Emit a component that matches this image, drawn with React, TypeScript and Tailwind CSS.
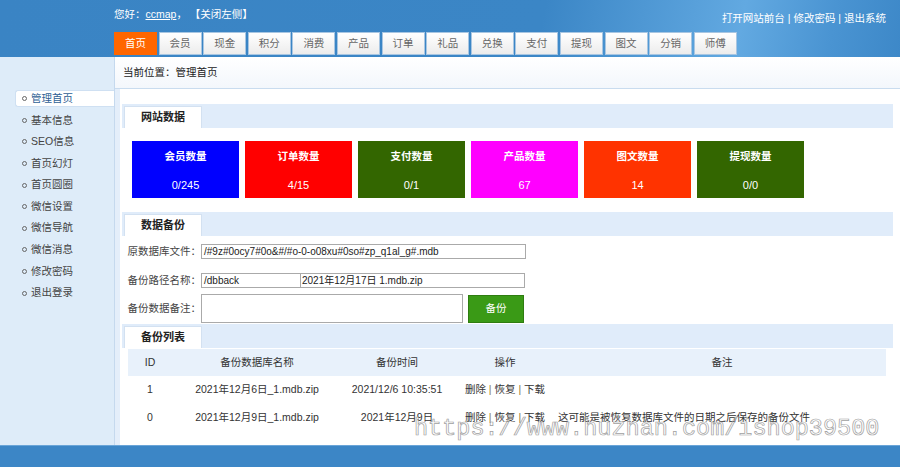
const tabs = ["首页", "会员", "现金", "积分", "消费", "产品", "订单", "礼品", "兑换", "支付", "提现", "图文", "分销", "师傅"];

const menu = ["管理首页", "基本信息", "SEO信息", "首页幻灯", "首页圆圈", "微信设置", "微信导航", "微信消息", "修改密码", "退出登录"];

const stats = [
  { title: "会员数量", value: "0/245", bg: "bg-[#0000ff]" },
  { title: "订单数量", value: "4/15", bg: "bg-[#ff0000]" },
  { title: "支付数量", value: "0/1", bg: "bg-[#336600]" },
  { title: "产品数量", value: "67", bg: "bg-[#ff00ff]" },
  { title: "图文数量", value: "14", bg: "bg-[#ff3300]" },
  { title: "提现数量", value: "0/0", bg: "bg-[#336600]" },
];

const backups = [
  { id: "1", name: "2021年12月6日_1.mdb.zip", time: "2021/12/6 10:35:51", note: "" },
  { id: "0", name: "2021年12月9日_1.mdb.zip", time: "2021年12月9日", note: "这可能是被恢复数据库文件的日期之后保存的备份文件" },
];

function SectionHead({ title }: { title: string }) {
  return (
    <div className="ml-[2px] mr-[7px] h-[24px] bg-[#e0ecfa] flex items-end pl-[2px]">
      <div className="w-[78px] h-[22px] bg-white border-t border-x border-[#d3e1f1] flex items-center justify-center font-bold text-[#222] text-[11px]">
        {title}
      </div>
    </div>
  );
}

export default function App() {
  return (
    <div
      className="w-[900px] h-[467px] flex flex-col overflow-hidden relative text-[10.5px] text-[#333]"
      style={{ fontFamily: '"Liberation Sans", "Noto Sans CJK SC", sans-serif' }}
    >
      {/* header */}
      <header className="h-[57px] shrink-0 bg-[linear-gradient(100deg,#3a84c4_0%,#3b86c6_60%,#62a9e1_82%,#4a94d2_92%,#3d88c8_100%)] pl-[114px] pr-[14px] flex flex-col">
        <div className="h-[32px] flex justify-between">
          <div className="text-white pt-[7px]">
            您好：<span className="underline">ccmap</span>， 【关闭左侧】
          </div>
          <div className="text-white pt-[11px]">打开网站前台 | 修改密码 | 退出系统</div>
        </div>
        <div className="flex gap-[1.6px] h-[23px]">
          {tabs.map((t, i) => (
            <div
              key={t}
              className={
                i === 0
                  ? "w-[43px] h-[23px] bg-[#ff6600] text-white flex items-center justify-center"
                  : "w-[43px] h-[23px] bg-[linear-gradient(#ffffff,#ececec)] border border-[#a8c6e2] text-[#666] flex items-center justify-center"
              }
            >
              {t}
            </div>
          ))}
        </div>
      </header>

      <div className="flex-1 flex min-h-0">
        {/* sidebar */}
        <aside className="w-[114px] shrink-0 bg-[#deecf9] pt-[31px]">
          {menu.map((m, i) => (
            <div key={m} className="h-[21.6px] flex items-center">
              <div
                className={
                  i === 0
                    ? "ml-[15px] w-[100px] h-[17px] bg-white rounded-l-[3px] border-y border-l border-[#cfe0f2] flex items-center pl-[6px] text-[#2f5f95] relative z-10"
                    : "ml-[15px] pl-[7px] flex items-center text-[#444]"
                }
              >
                <span className="inline-block w-[5px] h-[5px] rounded-full border border-[#666] mr-[4px]" />
                {m}
              </div>
            </div>
          ))}
        </aside>

        <main className="flex-1 flex flex-col min-w-0 border-l border-[#c5d9ee]">
          <div className="h-[32px] shrink-0 bg-[linear-gradient(#ffffff,#f3f7fc)] border-b border-[#c9dcef] flex items-center pl-[8px] text-[#222]">
            当前位置：管理首页
          </div>
          <div className="flex-1 flex bg-[#e4eefa]">
            <div className="ml-[5px] flex-1 bg-white pt-[15px]">
              <SectionHead title="网站数据" />
              <div className="flex gap-[6px] pl-[12px] pt-[13px]">
                {stats.map((s) => (
                  <div key={s.title} className={`w-[107px] h-[57px] ${s.bg} text-white flex flex-col items-center pt-[8px]`}>
                    <div className="font-bold">{s.title}</div>
                    <div className="mt-[12px] text-[11px]">{s.value}</div>
                  </div>
                ))}
              </div>

              <div className="mt-[14px]">
                <SectionHead title="数据备份" />
              </div>
              <div className="pt-[8px] text-[#444]">
                <div className="flex items-center h-[15px]">
                  <div className="w-[81px] text-right">原数据库文件：</div>
                  <div className="w-[325px] h-[15px] border border-[#aaa] pl-[2px] flex items-center text-[#222] text-[10px]">
                    /#9z#0ocy7#0o&amp;#/#o-0-o08xu#0so#zp_q1al_g#.mdb
                  </div>
                </div>
                <div className="flex items-center h-[15px] mt-[14px]">
                  <div className="w-[81px] text-right">备份路径名称：</div>
                  <div className="w-[100px] h-[15px] border border-[#aaa] pl-[2px] flex items-center text-[#222] text-[10px]">/dbback</div>
                  <div className="w-[224px] h-[15px] border border-l-0 border-[#aaa] pl-[1px] flex items-center text-[#222] text-[10px]">
                    2021年12月17日 1.mdb.zip
                  </div>
                </div>
                <div className="flex items-center mt-[6px]">
                  <div className="w-[81px] text-right">备份数据备注：</div>
                  <div className="w-[262px] h-[29px] border border-[#aaa]" />
                  <div className="ml-[5px] w-[56px] h-[28px] bg-[#3a9a16] border border-[#2e7d10] text-white flex items-center justify-center">
                    备份
                  </div>
                </div>
              </div>

              <div className="mt-[1px]">
                <SectionHead title="备份列表" />
              </div>
              <table className="ml-[8px] mt-[1px] w-[758px] border-collapse text-[#333]">
                <thead>
                  <tr className="h-[27px] bg-[#e8f1fb] font-normal">
                    <th className="w-[44px] font-normal">ID</th>
                    <th className="w-[170px] font-normal">备份数据库名称</th>
                    <th className="w-[110px] font-normal">备份时间</th>
                    <th className="w-[106px] font-normal">操作</th>
                    <th className="font-normal">备注</th>
                  </tr>
                </thead>
                <tbody>
                  {backups.map((b) => (
                    <tr key={b.id} className="h-[28px]">
                      <td className="text-center">{b.id}</td>
                      <td className="text-center">{b.name}</td>
                      <td className="text-center">{b.time}</td>
                      <td className="text-center">
                        删除 <span className="text-[#8a7a3a]">|</span> 恢复 <span className="text-[#8a7a3a]">|</span> 下载
                      </td>
                      <td className="text-left">{b.note}</td>
                    </tr>
                  ))}
                </tbody>
              </table>
            </div>
          </div>
        </main>
      </div>

      <footer className="h-[22px] shrink-0 bg-[#3c86c6] border-t border-[#6aa5d8]" />

      {/* watermark */}
      <div
        className="absolute left-[414px] top-[417px] text-[23.5px] leading-none text-transparent [-webkit-text-stroke:0.7px_#a0a0a0] pointer-events-none"
        style={{ fontFamily: '"Liberation Mono", monospace' }}
      >
        https://www.huzhan.com/ishop39500
      </div>
    </div>
  );
}
